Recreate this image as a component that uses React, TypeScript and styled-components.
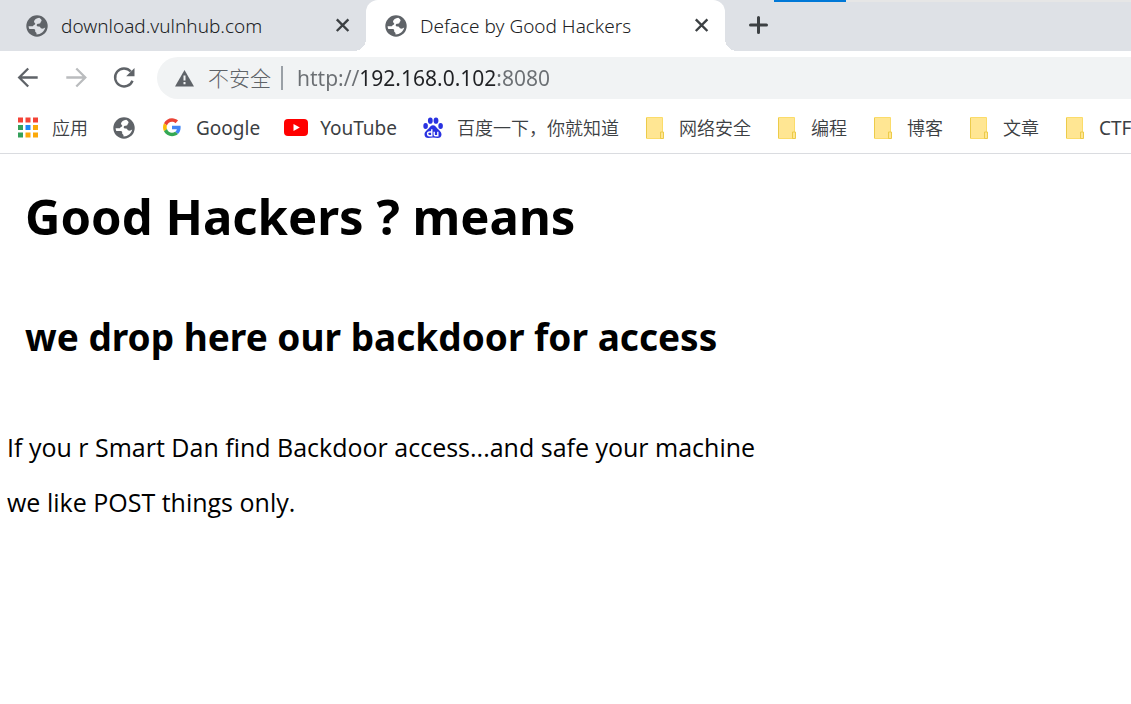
import React from "react";
import styled, { createGlobalStyle } from "styled-components";

const uiFont = '"Noto Sans", "Noto Sans CJK SC", sans-serif';
const bodyFont = '"Open Sans", "Noto Sans CJK SC", sans-serif';

const GlobalStyle = createGlobalStyle`
  * { box-sizing: border-box; }
  body { margin: 0; background: #fff; font-family: ${uiFont}; overflow-x: hidden; }
  button { border: 0; padding: 0; background: none; font: inherit; cursor: pointer; }
`;

const Window = styled.div`
  min-height: 100vh;
  background: #fff;
`;

const TabStrip = styled.header`
  position: relative;
  display: flex;
  height: 51px;
  background: #dee1e6;
`;

const WindowEdge = styled.div`
  position: absolute;
  top: 0;
  left: 774px;
  right: 0;
  height: 2px;
  background: #e6e6e6;
  &::before {
    content: "";
    display: block;
    width: 72px;
    height: 2px;
    background: #0078d7;
  }
`;

const Tab = styled.div<{ $active?: boolean }>`
  position: relative;
  display: flex;
  align-items: center;
  flex: 0 1 ${(p) => (p.$active ? 359 : 366)}px;
  min-width: 0;
  padding: 0 12px 0 ${(p) => (p.$active ? 18 : 25)}px;
  background: ${(p) => (p.$active ? "#fff" : "transparent")};
  border-radius: 12px 12px 0 0;
  ${(p) =>
    p.$active &&
    `
    &::before, &::after {
      content: "";
      position: absolute;
      bottom: 0;
      width: 12px;
      height: 12px;
    }
    &::before { right: 100%; background: radial-gradient(circle at 0 0, transparent 12px, #fff 12px); }
    &::after { left: 100%; background: radial-gradient(circle at 100% 0, transparent 12px, #fff 12px); }
  `}
`;

const TabTitle = styled.button`
  display: flex;
  align-items: center;
  gap: 12px;
  flex: 1;
  min-width: 0;
  color: #202124;
  font-size: 19px;
  font-weight: 300;
  line-height: 24px;
  white-space: nowrap;
`;

const IconButton = styled.button<{ $color?: string; $size?: number }>`
  display: grid;
  place-items: center;
  flex: none;
  width: ${(p) => p.$size ?? 24}px;
  height: ${(p) => p.$size ?? 24}px;
  color: ${(p) => p.$color ?? "#5f6368"};
`;

const NewTab = styled(IconButton)`
  margin: 9px 0 0 17px;
`;

const Toolbar = styled.nav`
  display: flex;
  align-items: center;
  gap: 16px;
  padding: 6px 0 6px 12px;
`;

const AddressBar = styled.div`
  display: flex;
  align-items: center;
  flex: 1;
  min-width: 0;
  height: 42px;
  margin-left: 1px;
  padding-left: 16px;
  background: #f1f3f4;
  border-radius: 21px 0 0 21px;
`;

const Security = styled.button`
  display: flex;
  align-items: center;
  gap: 12px;
  padding-right: 10px;
  color: #5f6368;
  font-size: 21px;
  font-weight: 300;
  line-height: 24px;
  white-space: nowrap;
`;

const Divider = styled.span`
  width: 2px;
  height: 24px;
  background: #9aa0a6;
`;

const Url = styled.input`
  flex: 1;
  min-width: 0;
  height: 32px;
  margin-left: 14px;
  padding: 0;
  border: 0;
  outline: 0;
  font: 21px/32px ${uiFont};
  color: #5f6368;
  background: linear-gradient(90deg, #6b6f73 62px, #202124 62px 199px, #6b6f73 199px);
  background-clip: text;
  -webkit-background-clip: text;
  -webkit-text-fill-color: transparent;
`;

const Bookmarks = styled.nav`
  display: flex;
  align-items: center;
  gap: 24px;
  height: 49px;
  padding: 0 0 3px 16px;
  overflow: hidden;
  border-bottom: 1px solid #dadce0;
`;

const Bookmark = styled.a<{ $cjk?: boolean }>`
  display: flex;
  align-items: center;
  gap: 12px;
  flex: none;
  color: #3c4043;
  font-size: ${(p) => (p.$cjk ? 18 : 19)}px;
  font-weight: ${(p) => (p.$cjk ? 350 : 400)};
  line-height: 24px;
  text-decoration: none;
  white-space: nowrap;
  svg { flex: none; }
`;

const Page = styled.main`
  padding: 26px 7px;
  color: #000;
`;

const Title = styled.h1`
  margin: 0 18px 61px;
  font-size: 49px;
  line-height: 72px;
`;

const Subtitle = styled.h2`
  margin: 0 18px 68px;
  font-size: 37px;
  line-height: 48px;
`;

const Text = styled.p`
  margin: 0 0 19px;
  font-family: ${bodyFont};
  font-size: 25px;
  line-height: 36px;
`;

const Globe = ({ land = "#fff" }: { land?: string }) => (
  <svg width="24" height="24" viewBox="0 0 24 24" aria-hidden="true">
    <circle cx="12" cy="12" r="10.7" fill="#5f6368" />
    <path
      d="M14.300 3.700C11.500 4.200 9.200 5.600 9 7.400C8.900 8.800 10.600 9 10.300 10.100C10 11.100 8.400 11.200 7.800 12.200H3.600C3.700 13.400 3.900 14.300 4.300 15H8.600C10.400 15.100 10.200 16.200 10.200 17.400C10.300 18.300 11.400 18.200 11.500 19V20.500C15.800 20.400 19.300 17.400 20.200 13.500C19.100 14.400 18 14.900 16.800 14.600C15.300 14.200 15.500 12.500 14 12.400C12.600 12.300 11.500 12.200 11.700 10.900C11.900 9.700 13.400 9.700 14.600 9.500C16 9.200 15.100 7.600 16.500 6.900C16.900 5.700 15.600 4.500 14.300 3.700Z"
      fill={land}
    />
  </svg>
);

const Close = () => (
  <svg width="24" height="24" viewBox="0 0 24 24" stroke="currentColor" strokeWidth="2.400" aria-hidden="true">
    <path d="M6.800 5.400 18.400 17M18.400 5.400 6.800 17" />
  </svg>
);

const Folder = () => (
  <svg width="24" height="24" viewBox="0 0 24 24" aria-hidden="true">
    <path d="M3.500 1.500h16V22.500h-16z" fill="#ffe693" stroke="#fbdc6a" />
    <path d="M3.500 2v20" stroke="#eccb4a" />
    <path d="M17.500 22.500v-6.500h3v6.500z" fill="#ffe693" stroke="#eccb4a" />
  </svg>
);

const Apps = () => (
  <svg width="24" height="24" viewBox="0 0 24 24" aria-hidden="true">
    <path d="M2 1.500h5v5H2zM9.500 1.500h5v5h-5zM17 1.500h5v5h-5z" fill="#f44336" />
    <path d="M2 9h5v5H2zM2 16.500h5v5H2z" fill="#34a05a" />
    <path d="M9.500 9h5v5h-5z" fill="#1e88f5" />
    <path d="M17 9h5v5h-5zM9.500 16.500h5v5h-5zM17 16.500h5v5h-5z" fill="#fba90a" />
  </svg>
);

const Google = () => (
  <svg width="24" height="24" viewBox="-8 -6 64 64" aria-hidden="true">
    <path fill="#EA4335" d="M24 9.500c3.540 0 6.710 1.220 9.210 3.600l6.850-6.850C35.900 2.380 30.470 0 24 0 14.620 0 6.510 5.380 2.560 13.220l7.980 6.190C12.430 13.720 17.740 9.500 24 9.500z" />
    <path fill="#4285F4" d="M46.980 24.550c0-1.570-.15-3.090-.38-4.550H24v9.020h12.940c-.58 2.960-2.260 5.480-4.780 7.180l7.730 6c4.510-4.180 7.090-10.360 7.090-17.650z" />
    <path fill="#FBBC05" d="M10.530 28.590c-.48-1.450-.76-2.990-.76-4.590s.27-3.140.76-4.590l-7.980-6.190C.92 16.460 0 20.120 0 24c0 3.880.92 7.540 2.560 10.780l7.970-6.190z" />
    <path fill="#34A853" d="M24 48c6.480 0 11.930-2.130 15.890-5.810l-7.730-6c-2.150 1.450-4.920 2.300-8.160 2.300-6.260 0-11.570-4.220-13.470-9.910l-7.980 6.190C6.510 42.620 14.620 48 24 48z" />
  </svg>
);

const YouTube = () => (
  <svg width="24" height="24" viewBox="0 0 24 24" aria-hidden="true">
    <rect y="3" width="24" height="17" rx="4" fill="#f00" />
    <path d="M9.500 7.900v7.200l6.300-3.600z" fill="#fff" />
  </svg>
);

const Baidu = () => (
  <svg width="24" height="24" viewBox="0 0 24 24" fill="#2932e1" aria-hidden="true">
    <ellipse cx="4.600" cy="10" rx="2.300" ry="2.900" />
    <ellipse cx="9.300" cy="4.700" rx="2.400" ry="3.100" />
    <ellipse cx="15" cy="4.700" rx="2.400" ry="3.100" />
    <ellipse cx="19.600" cy="10" rx="2.300" ry="2.900" />
    <path d="M12 9.200c2 0 3 1.500 4.200 3 1.500 1.800 4.300 3.300 4.300 6.200 0 2.300-1.700 3.600-3.800 3.600-1.700 0-3-.4-4.700-.4s-3 .4-4.700.4c-2.100 0-3.800-1.300-3.800-3.600 0-2.900 2.800-4.400 4.300-6.200 1.200-1.500 2.200-3 4.200-3z" />
    <path d="M10.800 13.200v6.500H8.500c-2.600 0-2.600-3.700 0-3.700h2M13.200 15.700v2.700c0 .900.400 1.300 1.200 1.300h2.400v-4" fill="none" stroke="#fff" strokeWidth="1.400" />
  </svg>
);

const Arrow = ({ forward }: { forward?: boolean }) => (
  <svg width="32" height="32" viewBox="0 0 32 32" fill="none" stroke="currentColor" strokeWidth="2.300" aria-hidden="true">
    <path d={forward ? "M6.300 15.500h18.500M16.300 6.500l9 9-9 9" : "M25.700 15.500H7.200M16.200 6.500l-9 9 9 9"} />
  </svg>
);

const Reload = () => (
  <svg width="32" height="32" viewBox="0 0 32 32" aria-hidden="true">
    <path d="M24.500 18.700A9 9 0 1 1 22.800 9.500" fill="none" stroke="currentColor" strokeWidth="2.400" />
    <path d="M26.500 6v8.300h-8.300z" fill="currentColor" />
  </svg>
);

const Warning = () => (
  <svg width="23" height="24" viewBox="0 0 23 24" aria-hidden="true">
    <path d="M11.500 4 21 20.500H2z" fill="#5f6368" />
    <path d="M11.500 9.500v5M11.500 16v2.200" stroke="#f1f3f4" strokeWidth="2" />
  </svg>
);

const folders = ["网络安全", "编程", "博客", "文章"];

export default function App() {
  return (
    <Window>
      <GlobalStyle />
      <TabStrip>
        <Tab>
          <TabTitle><Globe land="#dee1e6" />download.vulnhub.com</TabTitle>
          <IconButton $color="#3c4043" aria-label="Close tab"><Close /></IconButton>
        </Tab>
        <Tab $active>
          <TabTitle><Globe />Deface by Good Hackers</TabTitle>
          <IconButton $color="#3c4043" aria-label="Close tab"><Close /></IconButton>
        </Tab>
        <NewTab $color="#3c4043" $size={32} aria-label="New tab">
          <svg width="32" height="32" viewBox="0 0 32 32" stroke="currentColor" strokeWidth="3" strokeLinecap="round">
            <path d="M16.500 8.500v15M8.500 16h16" />
          </svg>
        </NewTab>
        <WindowEdge />
      </TabStrip>
      <Toolbar aria-label="Navigation">
        <IconButton $size={32} aria-label="Back"><Arrow /></IconButton>
        <IconButton $size={32} $color="#babcbe" aria-label="Forward"><Arrow forward /></IconButton>
        <IconButton $size={32} aria-label="Reload"><Reload /></IconButton>
        <AddressBar>
          <Security><Warning />不安全</Security>
          <Divider />
          <Url aria-label="Address" defaultValue="http://192.168.0.102:8080" spellCheck={false} />
        </AddressBar>
      </Toolbar>
      <Bookmarks aria-label="Bookmarks">
        <Bookmark href="#" $cjk><Apps />应用</Bookmark>
        <Bookmark href="#" aria-label="Website"><Globe /></Bookmark>
        <Bookmark href="#"><Google />Google</Bookmark>
        <Bookmark href="#"><YouTube />YouTube</Bookmark>
        <Bookmark href="#" $cjk><Baidu />百度一下，你就知道</Bookmark>
        {folders.map((name) => (
          <Bookmark href="#" $cjk key={name}><Folder />{name}</Bookmark>
        ))}
        <Bookmark href="#"><Folder />CTF</Bookmark>
      </Bookmarks>
      <Page>
        <Title>Good Hackers ? means</Title>
        <Subtitle>we drop here our backdoor for access</Subtitle>
        <Text>If you r Smart Dan find Backdoor access...and safe your machine</Text>
        <Text>we like POST things only.</Text>
      </Page>
    </Window>
  );
}
